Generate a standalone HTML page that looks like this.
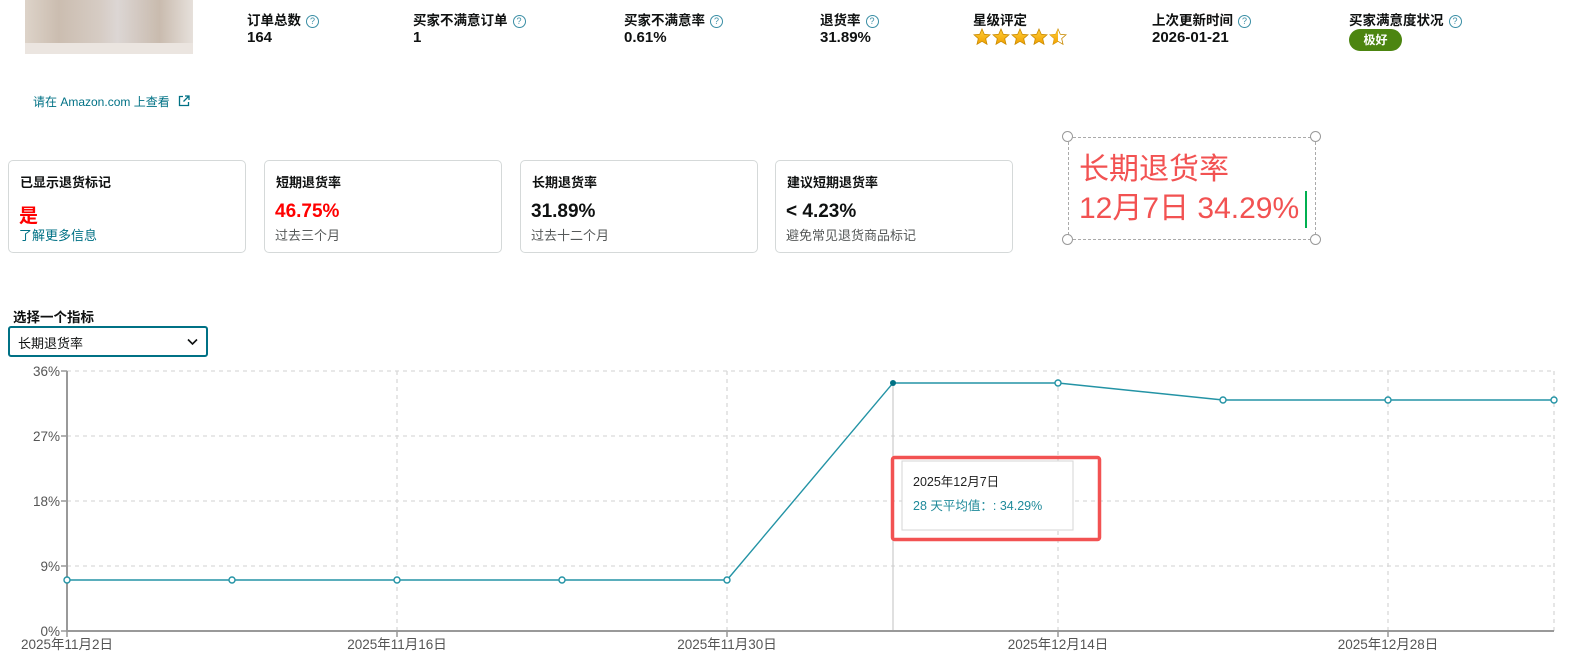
<!DOCTYPE html>
<html><head><meta charset="utf-8"><style>
*{margin:0;padding:0;box-sizing:border-box}
body{width:1571px;height:665px;overflow:hidden;background:#fff;font-family:"Liberation Sans","Noto Sans CJK SC",sans-serif;color:#0f1111;position:relative}
.a{position:absolute;white-space:nowrap}
.lbl{font-size:13.5px;font-weight:bold;top:9px}
.val{font-size:15px;font-weight:bold;top:29px}
.q{display:inline-block;width:13px;height:13px;border:1.3px solid #3a8ea5;border-radius:50%;font-size:9px;line-height:10px;text-align:center;color:#3a8ea5;margin-left:5px;vertical-align:1px;font-weight:normal}
.card{position:absolute;top:160px;width:238px;height:93px;border:1px solid #d5d9d9;border-radius:5px}
.card .t{position:absolute;left:11px;top:11px;font-size:13px;font-weight:bold}
.card .v{position:absolute;left:10px;top:40px;font-size:19px;font-weight:bold}
.card .s{position:absolute;left:10px;top:64px;font-size:13px;color:#565959}
</style></head><body>
<div class="a" style="left:25px;top:0;width:168px;height:54px;background:linear-gradient(90deg,#ddd3c9,#cbbdb0 20%,#d6ccc4 45%,#dcd6d4 55%,#c9bbae 80%,#e6e0db);"></div>
<div class="a" style="left:25px;top:43px;width:168px;height:11px;background:#ebe5e0"></div>

<div class="a lbl" style="left:247px">订单总数<span class="q">?</span></div>
<div class="a val" style="left:247px">164</div>
<div class="a lbl" style="left:413px">买家不满意订单<span class="q">?</span></div>
<div class="a val" style="left:413px">1</div>
<div class="a lbl" style="left:624px">买家不满意率<span class="q">?</span></div>
<div class="a val" style="left:624px">0.61%</div>
<div class="a lbl" style="left:820px">退货率<span class="q">?</span></div>
<div class="a val" style="left:820px">31.89%</div>
<div class="a lbl" style="left:973px">星级评定</div>
<svg class="a" style="left:973px;top:28px" width="96" height="18" viewBox="0 0 96 18">
<defs><linearGradient id="g" x1="0" y1="0" x2="0" y2="1"><stop offset="0" stop-color="#ffce3a"/><stop offset="1" stop-color="#f0a000"/></linearGradient>
<clipPath id="h"><rect x="0" y="0" width="9" height="18"/></clipPath></defs>
<g id="s"><polygon points="9,1 11.3,6.3 17,6.8 12.7,10.6 14,16.3 9,13.3 4,16.3 5.3,10.6 1,6.8 6.7,6.3" fill="url(#g)" stroke="#c98a00" stroke-width="0.8"/></g>
<use href="#s" x="19"/><use href="#s" x="38"/><use href="#s" x="57"/>
<g transform="translate(76,0)"><polygon points="9,1 11.3,6.3 17,6.8 12.7,10.6 14,16.3 9,13.3 4,16.3 5.3,10.6 1,6.8 6.7,6.3" fill="#fff" stroke="#c98a00" stroke-width="0.8"/><polygon clip-path="url(#h)" points="9,1 11.3,6.3 17,6.8 12.7,10.6 14,16.3 9,13.3 4,16.3 5.3,10.6 1,6.8 6.7,6.3" fill="url(#g)"/></g>
</svg>
<div class="a lbl" style="left:1152px">上次更新时间<span class="q">?</span></div>
<div class="a val" style="left:1152px">2026-01-21</div>
<div class="a lbl" style="left:1349px">买家满意度状况<span class="q">?</span></div>
<div class="a" style="left:1349px;top:29px;width:53px;height:22px;border-radius:11px;background:#4c8510;color:#fff;font-size:12px;font-weight:bold;text-align:center;line-height:22px">极好</div>

<div class="a" style="left:33px;top:93px;font-size:12px;color:#007185">请在 Amazon.com 上查看 <svg width="12" height="12" viewBox="0 0 12 12" style="margin-left:5px;vertical-align:-1px"><path d="M5 1.5H1.5v9h9V7M7 1h4v4M11 1L5.5 6.5" fill="none" stroke="#007185" stroke-width="1.3"/></svg></div>

<div class="card" style="left:8px"><div class="t">已显示退货标记</div><div class="v" style="color:#f00">是</div><div class="s" style="color:#007185">了解更多信息</div></div>
<div class="card" style="left:264px"><div class="t">短期退货率</div><div class="v" style="color:#f00">46.75%</div><div class="s">过去三个月</div></div>
<div class="card" style="left:520px"><div class="t">长期退货率</div><div class="v">31.89%</div><div class="s">过去十二个月</div></div>
<div class="card" style="left:775px"><div class="t">建议短期退货率</div><div class="v">&lt; 4.23%</div><div class="s">避免常见退货商品标记</div></div>

<div class="a" style="left:1068px;top:137px;width:248px;height:103px;border:1.5px dashed #aaa"></div>
<div class="a" style="left:1062px;top:131px;width:11px;height:11px;border:1.5px solid #999;border-radius:50%;background:#fff"></div>
<div class="a" style="left:1310px;top:131px;width:11px;height:11px;border:1.5px solid #999;border-radius:50%;background:#fff"></div>
<div class="a" style="left:1062px;top:234px;width:11px;height:11px;border:1.5px solid #999;border-radius:50%;background:#fff"></div>
<div class="a" style="left:1310px;top:234px;width:11px;height:11px;border:1.5px solid #999;border-radius:50%;background:#fff"></div>
<div class="a" style="left:1079px;top:150px;font-size:30px;line-height:39px;color:#f25252">长期退货率<br>12月7日 34.29%</div>
<div class="a" style="left:1305px;top:191px;width:2px;height:37px;background:#00b050"></div>

<div class="a" style="left:13px;top:306px;font-size:13.5px;font-weight:bold">选择一个指标</div>
<div class="a" style="left:8px;top:326px;width:200px;height:31px;border:2px solid #007185;border-radius:3px;font-size:13px;padding:5px 8px">长期退货率
<svg style="position:absolute;right:8px;top:10px" width="11" height="8" viewBox="0 0 11 8"><path d="M1 1.5l4.5 4.5 4.5-4.5" fill="none" stroke="#0f1111" stroke-width="1.6"/></svg></div>

<svg class="a" style="left:0;top:0" width="1571" height="665" viewBox="0 0 1571 665" font-family="Liberation Sans,Noto Sans CJK SC,sans-serif">
<g stroke="#d9d9d9" stroke-dasharray="4,4" stroke-width="1.3">
<line x1="67" y1="371" x2="1554" y2="371"/><line x1="67" y1="436" x2="1554" y2="436"/><line x1="67" y1="501" x2="1554" y2="501"/><line x1="67" y1="566" x2="1554" y2="566"/>
<line x1="397" y1="371" x2="397" y2="631"/><line x1="727" y1="371" x2="727" y2="631"/><line x1="1058" y1="371" x2="1058" y2="631"/><line x1="1388" y1="371" x2="1388" y2="631"/><line x1="1554" y1="371" x2="1554" y2="631"/>
</g>
<line x1="893" y1="383" x2="893" y2="631" stroke="#ccc" stroke-width="1.2"/>
<line x1="67" y1="371" x2="67" y2="632" stroke="#999" stroke-width="2"/>
<line x1="67" y1="631" x2="1554" y2="631" stroke="#999" stroke-width="2"/>
<g stroke="#999" stroke-width="1.5"><line x1="61" y1="371" x2="67" y2="371"/><line x1="61" y1="436" x2="67" y2="436"/><line x1="61" y1="501" x2="67" y2="501"/><line x1="61" y1="566" x2="67" y2="566"/><line x1="61" y1="631" x2="67" y2="631"/>
<line x1="397" y1="631" x2="397" y2="637"/><line x1="727" y1="631" x2="727" y2="637"/><line x1="1058" y1="631" x2="1058" y2="637"/><line x1="1388" y1="631" x2="1388" y2="637"/><line x1="67" y1="631" x2="67" y2="637"/></g>
<g font-size="13.5" fill="#555" text-anchor="end">
<text x="60" y="376">36%</text><text x="60" y="441">27%</text><text x="60" y="506">18%</text><text x="60" y="571">9%</text><text x="60" y="636">0%</text></g>
<g font-size="13.5" fill="#555" text-anchor="middle">
<text x="67" y="649">2025年11月2日</text><text x="397" y="649">2025年11月16日</text><text x="727" y="649">2025年11月30日</text><text x="1058" y="649">2025年12月14日</text><text x="1388" y="649">2025年12月28日</text></g>
<polyline points="67,580 232,580 397,580 562,580 727,580 893,383 1058,383 1223,400 1388,400 1554,400" fill="none" stroke="#2393a5" stroke-width="1.4"/>
<g fill="#fff" stroke="#2393a5" stroke-width="1.4">
<circle cx="67" cy="580" r="3"/><circle cx="232" cy="580" r="3"/><circle cx="397" cy="580" r="3"/><circle cx="562" cy="580" r="3"/><circle cx="727" cy="580" r="3"/><circle cx="1058" cy="383" r="3"/><circle cx="1223" cy="400" r="3"/><circle cx="1388" cy="400" r="3"/><circle cx="1554" cy="400" r="3"/></g>
<circle cx="893" cy="383" r="3" fill="#007185"/>
<rect x="902" y="461" width="171" height="69" fill="#fff" stroke="#d5d5d5"/>
<rect x="892.5" y="457.5" width="207" height="82" fill="none" stroke="#f25252" stroke-width="3.5" rx="2"/>
<text x="913" y="486" font-size="12.5" fill="#222">2025年12月7日</text>
<text x="913" y="510" font-size="12.5" fill="#1f8a9a">28 天平均值：: 34.29%</text>
</svg>
</body></html>
